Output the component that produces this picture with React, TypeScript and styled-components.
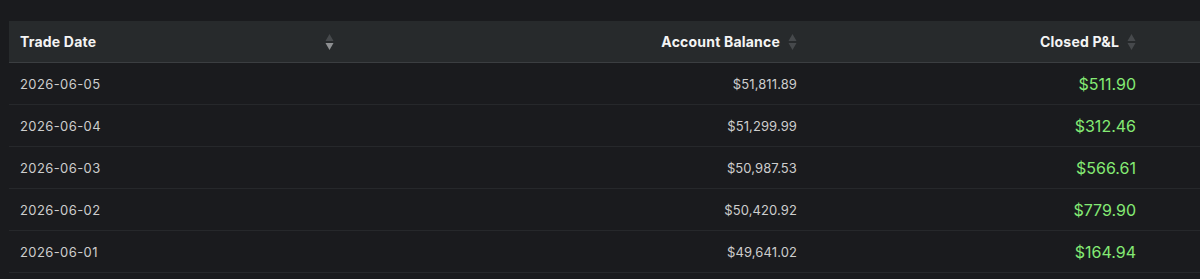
import React from "react";
import styled, { createGlobalStyle } from "styled-components";

const Global = createGlobalStyle`
  html, body { margin: 0; padding: 0; background: #1a1b1e; overflow: hidden; }
  body { font-family: "Poppins", "Inter", "Noto Sans", sans-serif; }
`;

const Page = styled.div`
  padding: 21px 0 0 9px;
  width: 1191px;
  height: 258px;
  background: #1a1b1e;
`;

const Table = styled.table`
  width: 100%;
  border-collapse: collapse;
  table-layout: fixed;
`;

const HeadCell = styled.th<{ $align?: "left" | "right" }>`
  height: 41px;
  padding: 0 11px;
  background: #272a2c;
  border-bottom: 1px solid #3b3e41;
  color: #f4f4f4;
  font-family: "Inter", "Noto Sans", sans-serif;
  font-weight: 700;
  font-size: 14px;
  letter-spacing: 0.2px;
  text-align: ${(p) => p.$align ?? "left"};
  vertical-align: middle;
`;

const HeadInner = styled.div<{ $align?: "left" | "right" }>`
  display: flex;
  align-items: center;
  justify-content: ${(p) => (p.$align === "right" ? "flex-end" : "space-between")};
  gap: 8px;
`;

const Row = styled.tr`
  border-bottom: 1px solid #26282b;
`;

const Cell = styled.td<{ $align?: "left" | "right"; $wide?: boolean }>`
  height: 41px;
  padding: 0 11px;
  color: #cdcdcd;
  font-family: "Inter", "Noto Sans", sans-serif;
  font-size: 13px;
  letter-spacing: ${(p) => (p.$wide ? "0.4px" : "0.1px")};
  text-align: ${(p) => p.$align ?? "left"};
  vertical-align: middle;
`;

const PnL = styled.span`
  color: #84ea74;
  font-family: "Inter", "Liberation Sans", sans-serif;
  font-size: 16px;
  font-weight: 400;
  letter-spacing: 0;
`;

const SortIcon = ({ active }: { active?: boolean }) => (
  <svg width="9" height="18" viewBox="0 0 9 18" style={{ flexShrink: 0 }}>
    <path d="M4.5 1 L8.5 8 L0.5 8 Z" fill="#46494c" />
    <path d="M4.5 17 L8.5 10 L0.5 10 Z" fill={active ? "#8e9092" : "#46494c"} />
  </svg>
);

const rows = [
  { date: "2026-06-05", bal: "$51,811.89", pnl: "$511.90" },
  { date: "2026-06-04", bal: "$51,299.99", pnl: "$312.46" },
  { date: "2026-06-03", bal: "$50,987.53", pnl: "$566.61" },
  { date: "2026-06-02", bal: "$50,420.92", pnl: "$779.90" },
  { date: "2026-06-01", bal: "$49,641.02", pnl: "$164.94" },
];

export default function App() {
  return (
    <>
      <Global />
      <Page>
        <Table>
          <colgroup>
            <col style={{ width: 336 }} />
            <col style={{ width: 463 }} />
            <col style={{ width: 339 }} />
            <col />
          </colgroup>
          <thead>
            <tr>
              <HeadCell>
                <HeadInner>
                  <span>Trade Date</span>
                  <SortIcon active />
                </HeadInner>
              </HeadCell>
              <HeadCell $align="right">
                <HeadInner $align="right">
                  <span>Account Balance</span>
                  <SortIcon />
                </HeadInner>
              </HeadCell>
              <HeadCell $align="right">
                <HeadInner $align="right">
                  <span>Closed P&amp;L</span>
                  <SortIcon />
                </HeadInner>
              </HeadCell>
              <HeadCell />
            </tr>
          </thead>
          <tbody>
            {rows.map((r) => (
              <Row key={r.date}>
                <Cell $wide>{r.date}</Cell>
                <Cell $align="right">{r.bal}</Cell>
                <Cell $align="right">
                  <PnL>{r.pnl}</PnL>
                </Cell>
                <Cell />
              </Row>
            ))}
          </tbody>
        </Table>
      </Page>
    </>
  );
}
